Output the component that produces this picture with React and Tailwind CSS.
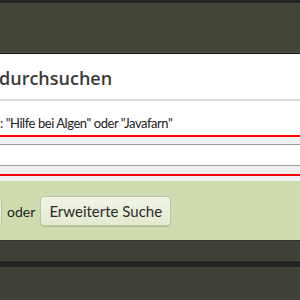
import React from "react";

const App = () => {
  return (
    <main className="w-[300px] h-[300px] overflow-hidden bg-[#404237] font-['Open_Sans',sans-serif]">
      <div className="h-[3px] bg-[#232426]" />
      <div className="h-[50px] bg-[#434538] border-t border-b border-[#4b4e40]" />
      <div className="h-[1px] bg-[#1b1c18]" />

      <section className="bg-white">
        <div className="h-[45px] border-t border-[#f3f3f3] flex items-end pb-[9px]">
          <h2 className="ml-[-1px] text-[18px] leading-[24px] font-semibold text-[#3b3b3b]">
            durchsuchen
          </h2>
        </div>
        <div className="h-[2px] bg-[#dcdcdc]" />

        <div className="h-[34px] flex items-end pb-[2px]">
          <span className="text-[13px] leading-[20px] tracking-[-0.45px] text-[#222] font-['Lato',sans-serif]">
            : "Hilfe bei Algen" oder "Javafarn"
          </span>
        </div>
        <div className="h-[2px] bg-[#ff0000]" />
        <div className="h-[7px] bg-[#f0f0f0]" />
        <div className="h-[1px] bg-[#9a9a9a]" />
        <div className="h-[20px] bg-white" />
        <div className="h-[1px] bg-[#9a9a9a]" />
        <div className="h-[8px] bg-[#efefef]" />
        <div className="h-[2px] bg-[#ff0000]" />
        <div className="h-[5px] bg-[#f2f2f2]" />
      </section>

      <footer className="h-[59px] bg-[#cedcb0] flex items-center pt-[1px] font-['Lato',sans-serif]">
        <div className="ml-[-40px] w-[42px] h-[29px] rounded-[4px] border border-[#b9c39f] bg-[#e9eedb]" />
        <span className="ml-[5px] text-[14px] text-[#222]">oder</span>
        <button className="ml-[5px] h-[30px] w-[131px] rounded-[4px] border border-[#bcc6a2] bg-gradient-to-b from-[#f1f4e6] to-[#e3ead0] shadow-[0_1px_1px_rgba(0,0,0,0.15)] text-[15px] text-[#2a2a2a]">
          Erweiterte Suche
        </button>
      </footer>

      <div className="h-[1px] bg-[#34362d]" />
      <div className="h-[19px] bg-[#404237]" />
      <div className="h-[1px] bg-[#4a4c41]" />
      <div className="h-[6px] bg-[#232420]" />
      <div className="h-[31px] bg-[#404237]" />
    </main>
  );
};

export default App;
